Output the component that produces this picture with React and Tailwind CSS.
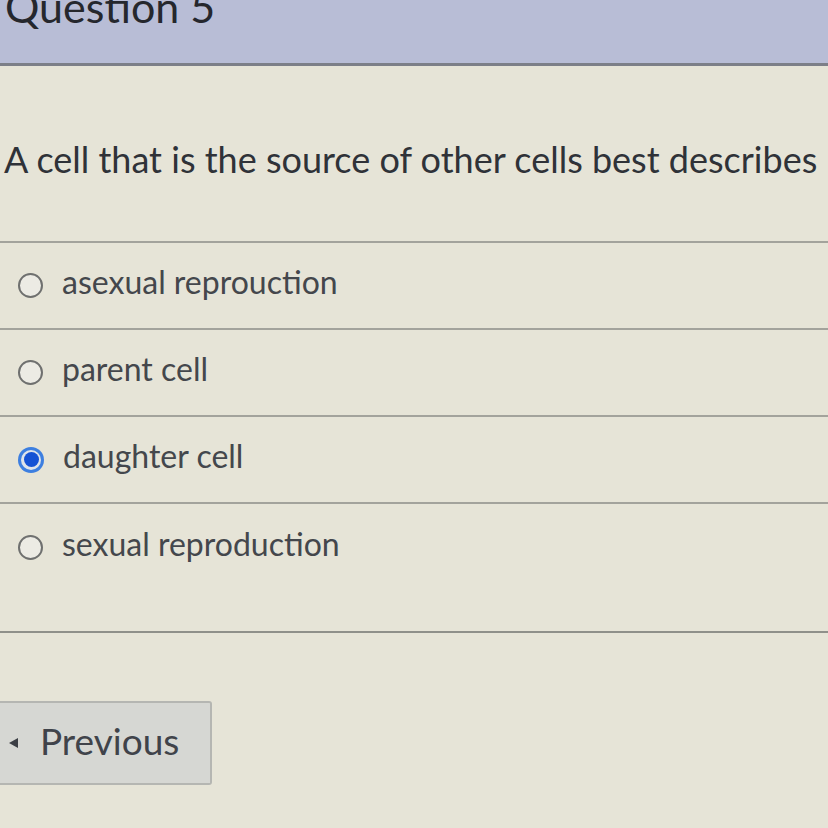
const options = [
  { label: 'asexual reprouction', checked: false },
  { label: 'parent cell', checked: false },
  { label: 'daughter cell', checked: true },
  { label: 'sexual reproduction', checked: false },
];

function Radio({ checked }) {
  if (checked) {
    return (
      <span className="flex h-[26px] w-[26px] shrink-0 items-center justify-center rounded-full bg-[#3d7fe0]">
        <span className="flex h-[20px] w-[20px] items-center justify-center rounded-full bg-[#dfe4ea]">
          <span className="h-[15px] w-[15px] rounded-full bg-[#1552d4]" />
        </span>
      </span>
    );
  }
  return <span className="h-[25px] w-[25px] shrink-0 rounded-full border-[2.5px] border-[#6f706f] bg-[#ecebe4]" />;
}

export default function App() {
  return (
    <div className="h-[828px] w-[828px] overflow-hidden bg-[#e6e4d7] text-[#3b3e44]" style={{ fontFamily: 'Lato, "Open Sans", sans-serif' }}>
      <header className="flex h-[66px] items-start border-b-[3px] border-[#7c7f88] bg-[#b8bdd6] px-[5px]">
        <h1 className="-mt-[17px] text-[43px] leading-[48px] text-[#25272d]">Question 5</h1>
      </header>

      <div className="pt-[70px]">
        <p className="pl-[4px] text-[36px] leading-[46px] whitespace-nowrap text-[#2f3238]">
          A cell that is the source of other cells best describes
        </p>

        <div className="mt-[59px] border-t-2 border-[#a3a39c]">
          {options.map((o, i) => (
            <div
              key={o.label}
              className={`flex h-[87px] items-center gap-[19px] pl-[18px] ${i < options.length - 1 ? 'border-b-2 border-[#a3a39c]' : ''}`}
            >
              <Radio checked={o.checked} />
              <span className="-mt-[8px] text-[32px] leading-[40px] text-[#44474c]">{o.label}</span>
            </div>
          ))}
        </div>

        <div className="mt-[40px] border-t-2 border-[#8f908a]" />

        <div className="mt-[68px] flex">
          <button className="-ml-[4px] flex h-[84px] w-[216px] items-center gap-[20px] rounded-r-[3px] border-2 border-l-0 border-[#b5b6b2] bg-[#d6d7d3] pl-[12px]">
            <svg width="12" height="12" viewBox="0 0 12 12">
              <path d="M10 1 L1 6 L10 11 Z" fill="#3c3f45" />
            </svg>
            <span className="-mt-[4px] text-[37px] leading-[40px] text-[#40434a]">Previous</span>
          </button>
        </div>
      </div>
    </div>
  );
}
